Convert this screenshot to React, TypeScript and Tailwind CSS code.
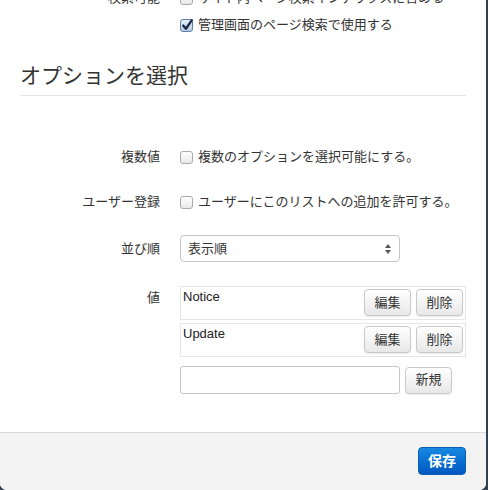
import React from "react";

const font = { fontFamily: '"Liberation Sans", "Noto Sans CJK JP", sans-serif' };

function Box({ checked = false }: { checked?: boolean }) {
  return (
    <span
      className={`relative inline-block h-[13px] w-[13px] shrink-0 rounded-[3px] border ${
        checked ? "border-[#5b7fa8] bg-gradient-to-b from-[#e6effa] to-[#b7cce8]" : "border-[#a9a9a9] bg-gradient-to-b from-white to-[#e9e9e9]"
      }`}
    >
      {checked && (
        <svg viewBox="0 0 13 13" className="absolute -left-px -top-[2px] h-[14px] w-[14px]">
          <path d="M3 7 L5.5 10 L11 2" fill="none" stroke="#1d2a44" strokeWidth="2.2" strokeLinecap="round" strokeLinejoin="round" />
        </svg>
      )}
    </span>
  );
}

function Btn({ children }: { children: React.ReactNode }) {
  return (
    <button className="h-[27px] w-[47px] rounded-[4px] border border-[#c8c8c8] bg-gradient-to-b from-white to-[#e8e8e8] text-[13px] text-[#333] shadow-[0_1px_1px_rgba(0,0,0,0.08)]">
      {children}
    </button>
  );
}

function Row({ label, children, className = "" }: { label: string; children: React.ReactNode; className?: string }) {
  return (
    <div className={`flex items-center ${className}`}>
      <div className="w-[140px] shrink-0 text-right text-[13px] text-[#333]">{label}</div>
      <div className="ml-5 flex flex-1 items-center">{children}</div>
    </div>
  );
}

export default function App() {
  const items = ["Notice", "Update"];
  return (
    <div className="h-[490px] w-[488px] overflow-hidden bg-[#33414f]" style={font}>
      <div className="flex h-[490px] w-[486px] flex-col overflow-hidden rounded-b-[7px] bg-white">
        <div className="flex-1 px-5">
          <Row label="検索可能" className="-mt-[14px] h-6">
            <Box />
            <span className="ml-[5px] text-[13px] text-[#333]">サイト内ページ検索インデックスに含める</span>
          </Row>
          <Row label="" className="mt-[3px] h-6">
            <Box checked />
            <span className="ml-[5px] text-[13px] text-[#333]">管理画面のページ検索で使用する</span>
          </Row>
          <h3 className="mt-[24px] border-b border-[#e5e5e5] pb-[4px] text-[21px] leading-[30px] font-normal text-[#333]">
            オプションを選択
          </h3>
          <Row label="複数値" className="mt-[49px] h-6">
            <Box />
            <span className="ml-[5px] text-[13px] text-[#333]">複数のオプションを選択可能にする。</span>
          </Row>
          <Row label="ユーザー登録" className="mt-[21px] h-6">
            <Box />
            <span className="ml-[5px] text-[13px] text-[#333]">ユーザーにこのリストへの追加を許可する。</span>
          </Row>
          <Row label="並び順" className="mt-[21px] h-[27px]">
            <div className="flex h-[27px] w-[220px] items-center justify-between rounded-[4px] border border-[#c6c6c6] bg-white pl-[7px] pr-[8px] text-[13px] text-[#333]">
              <span>表示順</span>
              <svg viewBox="0 0 6 10" className="h-[10px] w-[6px]">
                <path d="M0 4 L3 0 L6 4 Z M0 6 L3 10 L6 6 Z" fill="#555" />
              </svg>
            </div>
          </Row>
          <div className="mt-[24px] flex">
            <div className="w-[140px] shrink-0 pt-[2px] text-right text-[13px] text-[#333]">値</div>
            <div className="ml-5 flex flex-1 flex-col gap-[3px]">
              {items.map((it) => (
                <div key={it} className="flex h-[34px] items-start justify-between border border-[#e6e6e6] pl-[2px] pr-[2px] pt-[2px]">
                  <span className="text-[13px] leading-[16px] text-[#222]">{it}</span>
                  <div className="flex gap-[5px]">
                    <Btn>編集</Btn>
                    <Btn>削除</Btn>
                  </div>
                </div>
              ))}
              <div className="mt-[6px] flex items-center gap-[5px]">
                <input className="h-[28px] w-[220px] rounded-[3px] border border-[#c6c6c6] bg-white" />
                <Btn>新規</Btn>
              </div>
            </div>
          </div>
        </div>
        <div className="flex h-[58px] justify-end border-t border-[#d9d9d9] bg-[#f3f3f3] pr-[20px] pt-[14px]">
          <button className="h-[28px] w-[48px] rounded-[4px] border border-[#0b5db5] bg-gradient-to-b from-[#1789e2] to-[#0358bf] text-[14px] font-bold text-white">
            保存
          </button>
        </div>
      </div>
    </div>
  );
}
